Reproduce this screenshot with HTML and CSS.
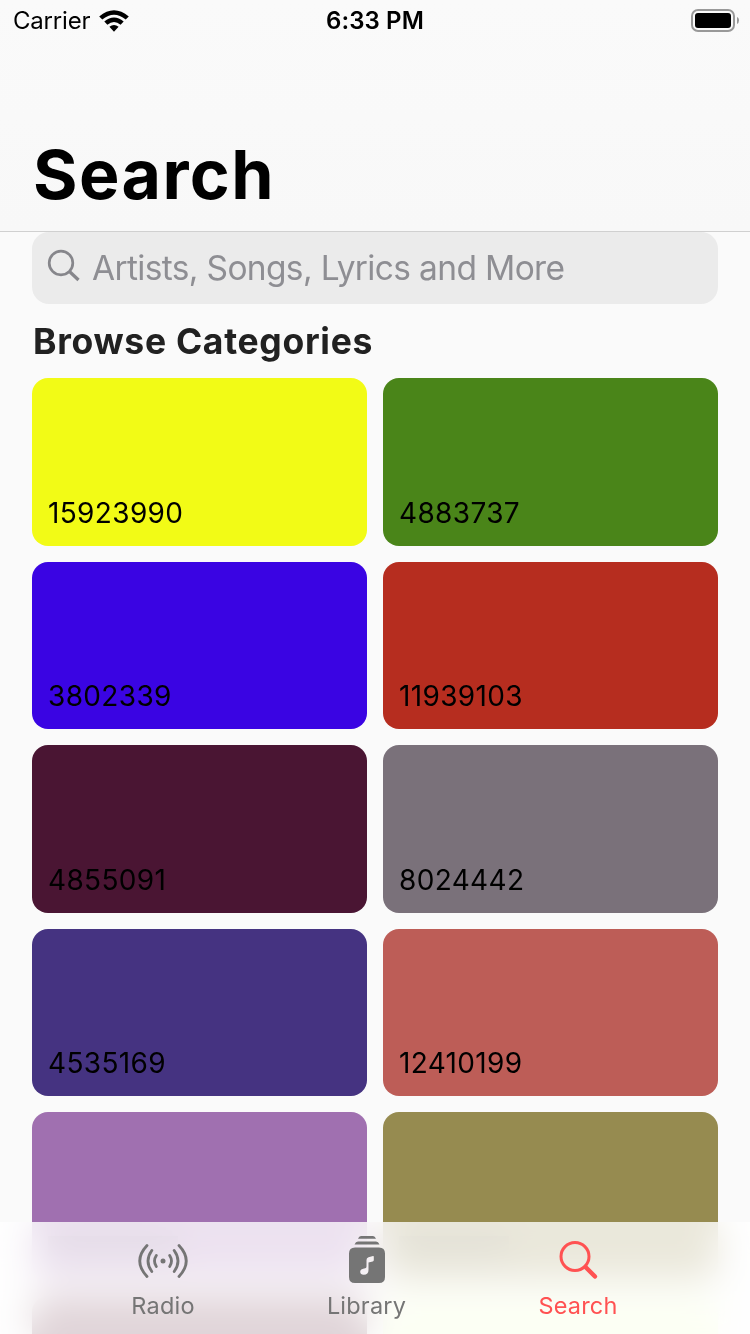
FILE: index.html
```html
<!DOCTYPE html>
<html lang="en">
<head>
<meta charset="utf-8">
<title>Search</title>
<link rel="stylesheet" href="styles.css">
</head>
<body>
<div class="screen">
  <header class="header">
    <div class="status">
      <div class="carrier"><span class="carrier-name">Carrier</span>
        <svg class="wifi" width="30" height="22" viewBox="0 0 30 22"><path d="M.2 6.4Q15-5.8 29.800 6.400L26.700 9.600Q15-.1 3.300 9.600ZM5.300 11.600Q15 3.400 24.700 11.600L21.600 14.800Q15 9.300 8.400 14.800ZM10.400 16.800Q15 13.200 19.600 16.800L15 21.700Z"/></svg>
      </div>
      <span class="time">6:33 PM</span>
      <svg class="battery" width="48" height="23" viewBox="0 0 48 23"><rect x="1" y="1" width="42" height="21" rx="6" fill="none" stroke="#999" stroke-width="2"/><rect x="4" y="4" width="36" height="15" rx="3"/><path d="M46 8Q48.200 9 48 11.500Q48 14 46 15Z" fill="#999"/></svg>
    </div>
    <h1 class="title">Search</h1>
  </header>
  <main class="content">
    <div class="search">
      <svg class="search-icon" width="34" height="34" viewBox="0 0 34 34"><circle cx="14" cy="14" r="11.800" /><path d="M22.500 22.500L31.500 31" stroke-width="3.200"/></svg>
      <span class="placeholder">Artists, Songs, Lyrics and More</span>
    </div>
    <h2 class="heading">Browse Categories</h2>
    <div class="grid">
      <div class="card yellow"><span>15923990</span></div>
      <div class="card green"><span>4883737</span></div>
      <div class="card blue"><span>3802339</span></div>
      <div class="card red"><span>11939103</span></div>
      <div class="card wine"><span>4855091</span></div>
      <div class="card gray"><span>8024442</span></div>
      <div class="card indigo"><span>4535169</span></div>
      <div class="card coral"><span>12410199</span></div>
      <div class="card purple"></div>
      <div class="card olive"></div>
      <div class="card maroon"></div>
      <div class="card lime"></div>
    </div>
  </main>
  <nav class="tabs">
    <div class="tab radio">
      <svg width="50" height="50" viewBox="0 0 50 50" fill="none" stroke="#757575" stroke-width="2.800" stroke-linecap="round"><circle cx="25" cy="25" r="2.500" fill="#757575" stroke="none"/><path d="M18.300 19.500Q14.700 25 18.300 30.500M13.800 14.500Q6.200 25 13.800 35.500M9 9.500Q-5.500 25 9 40.500M31.700 19.500Q35.300 25 31.700 30.500M36.200 14.500Q43.800 25 36.200 35.500M41 9.500Q55.500 25 41 40.500"/></svg>
      <span class="label-radio">Radio</span>
    </div>
    <div class="tab library">
      <svg width="50" height="50" viewBox="0 0 50 50" fill="#757575"><path d="M16 2.800Q17 0 19 0H31Q33 0 34 2.800ZM12.500 8.500Q13.700 5.500 16 5.500H34Q36.300 5.500 37.500 8.500Z"/><path fill-rule="evenodd" d="M13 11.500H37Q43 11.500 43 17.500V41Q43 47 37 47H13Q7 47 7 41V17.500Q7 11.500 13 11.500ZM24.500 24Q24.500 21.700 26.500 21.300L31 20Q31.800 19.800 31.800 20.700V24Q31.800 25.200 30.700 25.500L26.500 26.500V34Q26.500 38.800 21.700 38.800Q18.200 38.600 18.200 35.800Q18.200 33.500 21.200 32.800L23.200 32.300Q24.500 32 24.500 30.500Z"/></svg>
      <span class="label-library">Library</span>
    </div>
    <div class="tab active">
      <svg width="50" height="50" viewBox="0 0 50 50" fill="none" stroke="#ff5252" stroke-linecap="round"><circle cx="22" cy="20.500" r="14" stroke-width="3"/><path d="M32.500 31L42 40.500" stroke-width="4.500"/></svg>
      <span class="label-search">Search</span>
    </div>
  </nav>
</div>
</body>
</html>
```
FILE: styles.css
```css
* { box-sizing: border-box; }
body { margin: 0; font-family: Inter, "Liberation Sans", sans-serif; background: #fafafa; color: #000; }
.screen { position: relative; width: 750px; height: 1334px; overflow: hidden; }
.header { height: 232px; border-bottom: 1px solid #d0d0d0; background: linear-gradient(#fafafa, #f8f8f8); }
.status { height: 40px; display: grid; grid-template-columns: 250px 1fr 250px; align-items: center; padding: 0 11px 0 13px; font-size: 24px; line-height: 40px; }
.carrier { display: flex; align-items: center; gap: 9px; }
.carrier-name { letter-spacing: -.2px; padding-top: 1px; }
.time { text-align: center; font-weight: 600; letter-spacing: .1px; padding: 1px 2px 0 0; }
.battery { justify-self: end; }
.title { margin: 94px 0 0 33px; font-size: 68px; line-height: 80px; font-weight: 700; letter-spacing: 1.4px; }
.content { padding: 0 32px; }
.search { height: 72px; border-radius: 17px; background: #ebebeb; display: flex; align-items: center; padding: 0 15px; gap: 11px; }
.search-icon { fill: none; stroke: #86868b; stroke-width: 2.7; stroke-linecap: butt; margin-top: -4px; }
.placeholder { color: #8e8e93; font-size: 33.5px; letter-spacing: -.65px; }
.heading { margin: 0; padding: 1px 0 0 1px; height: 74px; line-height: 74px; font-size: 35.5px; font-weight: 700; color: #212121; letter-spacing: .7px; }
.grid { display: grid; grid-template-columns: 335px 335px; grid-auto-rows: 167.5px; gap: 16px; }
.card { border-radius: 16px; padding: 0 16px 16px; display: flex; align-items: flex-end; font-size: 28px; line-height: 34px; letter-spacing: .35px; }
.yellow { background: #f2fb16; }
.green { background: #4a8519; }
.blue { background: #3a04e3; }
.red { background: #b62d1f; }
.wine { background: #4a1533; }
.gray { background: #7a717a; }
.indigo { background: #453381; }
.coral { background: #bd5d57; }
.purple { background: linear-gradient(rgba(0,0,0,.3), rgba(0,0,0,.3)) 16px 124px / 130px 20px no-repeat #a070b0; }
.olive { background: linear-gradient(rgba(0,0,0,.3), rgba(0,0,0,.3)) 16px 124px / 110px 20px no-repeat #968b50; }
.maroon { background: #632d40; }
.lime { background: #f0ffc8; }
.tabs { position: absolute; left: 0; right: 0; bottom: 0; height: 112px; padding: 0 60px; display: grid; grid-template-columns: 206px 201px 222px; background: rgba(255,255,255,.8); backdrop-filter: blur(18px) saturate(1.1); }
.tab { display: flex; flex-direction: column; align-items: center; padding-top: 14px; color: #757575; font-size: 23.5px; line-height: 28px; gap: 6px; letter-spacing: .2px; }
.active { color: #ff5252; }
```
